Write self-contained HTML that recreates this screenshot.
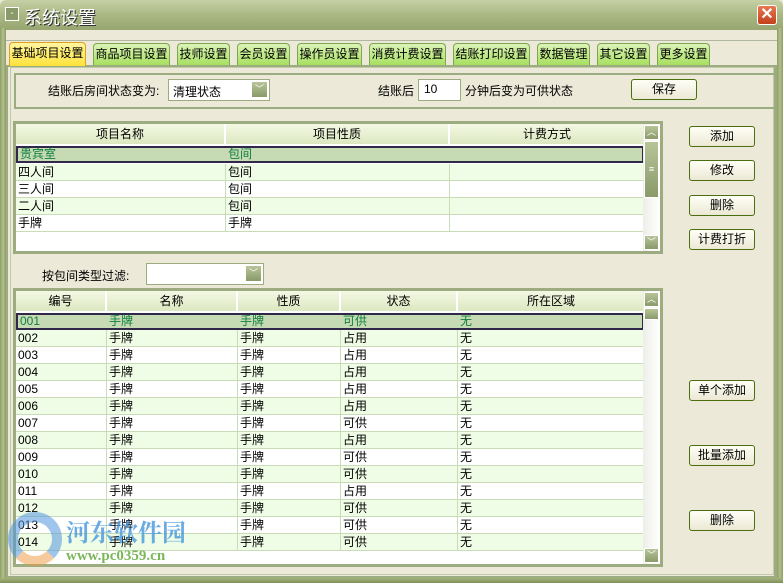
<!DOCTYPE html>
<html><head><meta charset="utf-8"><style>
*{margin:0;padding:0;box-sizing:border-box}
body{width:783px;height:583px;overflow:hidden;background:#ece9d8;font-family:"Liberation Sans","Noto Sans CJK SC","WenQuanYi Zen Hei",sans-serif;font-size:12px;color:#000;position:relative}
.a{position:absolute}
.title{left:0;top:0;width:783px;height:30px;background:linear-gradient(#c7d0a5,#aab884 50%,#97a670);border-radius:6px 6px 0 0}
.frameL{left:0;top:28px;width:6px;height:555px;background:linear-gradient(90deg,#8d9d66,#b3c08e,#8d9d66)}
.frameR{right:0;top:28px;width:6px;height:555px;background:linear-gradient(90deg,#8d9d66,#b3c08e,#8d9d66)}
.frameB{left:0;bottom:0;width:783px;height:5px;background:linear-gradient(#a5b37e,#7f9058)}
.tab{top:43px;height:22px;border:1px solid #7ea651;border-bottom:none;border-radius:4px 4px 0 0;background:linear-gradient(#dcf3b8,#a7e060);font-size:12px;line-height:20px;text-align:center}
.tab.sel{background:linear-gradient(#fff6a0,#ffe23a);border-color:#e0a020;top:42px;height:24px}
.btn{width:66px;height:21px;border:1px solid #4a6e10;border-radius:3px;background:linear-gradient(#fffff6,#ece8d4);text-align:center;line-height:19px;font-size:12px}
.grid{border:3px solid #9cac80;background:#fff;overflow:hidden}
.hd{position:absolute;top:0;height:20px;background:linear-gradient(#f4f8e4,#dce8c0);border-right:2px solid #fff;text-align:center;line-height:20px}
.row{position:absolute;left:0;height:17px;line-height:16px;border-bottom:1px solid #c8dcb8;white-space:nowrap}
.row span{position:absolute;top:0;padding-left:2px;border-right:1px solid #c8dcb8;height:17px}
.odd{background:#effde6}
.row.sel{background:#c6dab4;color:#108040;border:2px solid #302848;line-height:13px}
.row.sel span{height:13px}
.sb{position:absolute;right:0;top:0;width:17px;background:linear-gradient(90deg,#eeeee8,#fff)}
.sbb{position:absolute;left:1px;width:15px;height:15px;background:linear-gradient(#b7c498,#8a9a6a);border:1px solid #fff;color:#fff;font-size:9px;text-align:center;line-height:13px}
.combo{background:#fff;border:1px solid #9cac80}
.dd{position:absolute;right:1px;top:1px;width:17px;height:17px;background:linear-gradient(#b7c498,#8a9a6a);border:1px solid #fff;color:#fff;font-size:9px;text-align:center;line-height:15px}
</style></head><body>
<div class="a title"></div>
<div class="a" style="left:5px;top:7px;width:14px;height:14px;border:1px solid #fff;background:#8a9a6a;color:#fff;font-size:10px;line-height:11px;text-align:center">-</div>
<div class="a" style="left:24px;top:4px;font-size:18px;color:#fff;text-shadow:1px 1px 0 #333">系统设置</div>
<div class="a" style="left:757px;top:5px;width:20px;height:20px;border:1px solid #fff;border-radius:3px;background:linear-gradient(#e8774f,#c2401c);color:#fff;font-size:16px;line-height:18px;text-align:center;font-weight:bold">✕</div>
<div class="a frameL"></div><div class="a frameR"></div><div class="a frameB"></div>
<div class="a" style="left:6px;top:40px;width:771px;height:1px;background:#b0b8a0"></div>
<div class="a" style="left:6px;top:65px;width:771px;height:513px;border:2px solid #9cac80;border-right-width:3px"></div>
<div class="a" style="left:10px;top:67px;width:764px;height:508px;border:1px solid #c0cca8"></div>
<div class="a tab sel" style="left:9px;width:77px">基础项目设置</div>
<div class="a tab" style="left:93px;width:77px">商品项目设置</div>
<div class="a tab" style="left:177px;width:53px">技师设置</div>
<div class="a tab" style="left:237px;width:53px">会员设置</div>
<div class="a tab" style="left:297px;width:65px">操作员设置</div>
<div class="a tab" style="left:369px;width:77px">消费计费设置</div>
<div class="a tab" style="left:453px;width:77px">结账打印设置</div>
<div class="a tab" style="left:537px;width:53px">数据管理</div>
<div class="a tab" style="left:597px;width:53px">其它设置</div>
<div class="a tab" style="left:657px;width:53px">更多设置</div>

<div class="a" style="left:14px;top:73px;width:762px;height:36px;border:2px solid #9cac80"></div>
<div class="a" style="left:48px;top:82px">结账后房间状态变为:</div>
<div class="a combo" style="left:168px;top:79px;width:102px;height:22px"><span style="position:absolute;left:4px;top:3px">清理状态</span><div class="dd">﹀</div></div>
<div class="a" style="left:378px;top:82px">结账后</div>
<div class="a combo" style="left:418px;top:79px;width:43px;height:22px"><span style="position:absolute;left:5px;top:2px">10</span></div>
<div class="a" style="left:465px;top:82px">分钟后变为可供状态</div>
<div class="a btn" style="left:631px;top:79px">保存</div>

<div class="a grid" style="left:13px;top:121px;width:650px;height:133px">
<div class="hd" style="left:0;width:210px">项目名称</div>
<div class="hd" style="left:210px;width:224px">项目性质</div>
<div class="hd" style="left:434px;width:196px">计费方式</div>
<div class="row sel" style="top:22px;width:628px"><span style="left:0;width:208px;border:none">贵宾室</span><span style="left:208px;width:224px;border:none">包间</span></div>
<div class="row odd" style="top:40px;width:630px"><span style="left:0;width:210px">四人间</span><span style="left:210px;width:224px">包间</span></div>
<div class="row" style="top:57px;width:630px"><span style="left:0;width:210px">三人间</span><span style="left:210px;width:224px">包间</span></div>
<div class="row odd" style="top:74px;width:630px"><span style="left:0;width:210px">二人间</span><span style="left:210px;width:224px">包间</span></div>
<div class="row" style="top:91px;width:630px"><span style="left:0;width:210px">手牌</span><span style="left:210px;width:224px">手牌</span></div>
<div class="sb" style="height:127px"><div class="sbb" style="top:1px">︿</div><div class="sbb" style="top:17px;height:57px;line-height:55px">≡</div><div class="sbb" style="top:111px">﹀</div></div>
</div>

<div class="a btn" style="left:689px;top:126px">添加</div>
<div class="a btn" style="left:689px;top:160px">修改</div>
<div class="a btn" style="left:689px;top:195px">删除</div>
<div class="a btn" style="left:689px;top:229px">计费打折</div>

<div class="a" style="left:42px;top:267px">按包间类型过滤:</div>
<div class="a combo" style="left:146px;top:263px;width:118px;height:22px"><div class="dd">﹀</div></div>

<div class="a grid" style="left:13px;top:288px;width:650px;height:279px">
<div class="hd" style="left:0;width:91px">编号</div>
<div class="hd" style="left:91px;width:131px">名称</div>
<div class="hd" style="left:222px;width:103px">性质</div>
<div class="hd" style="left:325px;width:117px">状态</div>
<div class="hd" style="left:442px;width:188px">所在区域</div>
<div class="row sel" style="top:22px;width:628px"><span style="left:0;width:89px;border:none">001</span><span style="left:89px;width:131px;border:none">手牌</span><span style="left:220px;width:103px;border:none">手牌</span><span style="left:323px;width:117px;border:none">可供</span><span style="left:440px;border:none">无</span></div>
<div id="rows"></div>
<div class="sb" style="height:273px"><div class="sbb" style="top:1px">︿</div><div class="sbb" style="top:17px;height:12px"></div><div class="sbb" style="top:257px">﹀</div></div>
</div>

<div class="a btn" style="left:689px;top:380px">单个添加</div>
<div class="a btn" style="left:689px;top:445px">批量添加</div>
<div class="a btn" style="left:689px;top:510px">删除</div>

<div class="a" style="left:8px;top:512px;width:54px;height:54px;border-radius:50%;border:10px solid rgba(80,150,220,0.55);border-bottom-color:rgba(240,150,60,0.5)"></div>
<div class="a" style="left:66px;top:513px;font-size:24px;font-weight:bold;color:rgba(70,150,220,0.8);font-family:'Noto Serif CJK SC',serif">河东软件园</div>
<div class="a" style="left:66px;top:548px;font-size:15px;font-weight:bold;color:rgba(100,170,60,0.85);font-family:'Liberation Serif',serif">www.pc0359.cn</div>

<script>
var st=["占用","占用","占用","占用","占用","可供","占用","可供","可供","占用","可供","可供","可供"];
var h="";
for(var i=0;i<13;i++){var n=i+2;var t=39+i*17;var cls=(i%2==0)?"row odd":"row";
var id="0"+(n<10?"0"+n:n);
h+='<div class="'+cls+'" style="top:'+t+'px;width:630px"><span style="left:0;width:91px">'+id+'</span><span style="left:91px;width:131px">手牌</span><span style="left:222px;width:103px">手牌</span><span style="left:325px;width:117px">'+st[i]+'</span><span style="left:442px;border:none">无</span></div>';}
document.getElementById("rows").outerHTML=h;
</script>
</body></html>
